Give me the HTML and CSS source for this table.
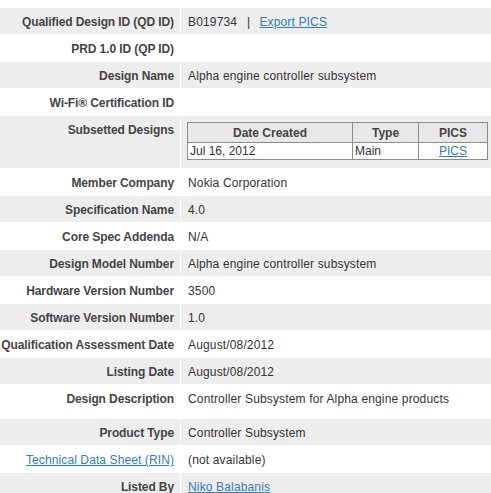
FILE: index.html
```html
<!DOCTYPE html>
<html>
<head>
<meta charset="utf-8">
<link rel="stylesheet" href="styles.css">
</head>
<body>
<div class="details">
  <div class="row gray"><div class="label">Qualified Design ID (QD ID)</div><div class="value">B019734<span class="sep">|</span><a href="#">Export PICS</a></div></div>
  <div class="row"><div class="label">PRD 1.0 ID (QP ID)</div><div class="value"></div></div>
  <div class="row gray"><div class="label">Design Name</div><div class="value">Alpha engine controller subsystem</div></div>
  <div class="row"><div class="label">Wi-Fi® Certification ID</div><div class="value"></div></div>
  <div class="row gray tall"><div class="label">Subsetted Designs</div><div class="value sub">
    <table class="subs">
      <thead><tr><th class="c1">Date Created</th><th class="c2">Type</th><th class="c3">PICS</th></tr></thead>
      <tbody><tr><td>Jul 16, 2012</td><td>Main</td><td class="center"><a href="#">PICS</a></td></tr></tbody>
    </table>
  </div></div>
  <div class="row"><div class="label">Member Company</div><div class="value">Nokia Corporation</div></div>
  <div class="row gray"><div class="label">Specification Name</div><div class="value">4.0</div></div>
  <div class="row"><div class="label">Core Spec Addenda</div><div class="value">N/A</div></div>
  <div class="row gray"><div class="label">Design Model Number</div><div class="value">Alpha engine controller subsystem</div></div>
  <div class="row"><div class="label">Hardware Version Number</div><div class="value">3500</div></div>
  <div class="row gray"><div class="label">Software Version Number</div><div class="value">1.0</div></div>
  <div class="row"><div class="label">Qualification Assessment Date</div><div class="value">August/08/2012</div></div>
  <div class="row gray"><div class="label">Listing Date</div><div class="value">August/08/2012</div></div>
  <div class="row desc"><div class="label">Design Description</div><div class="value">Controller Subsystem for Alpha engine products</div></div>
  <div class="row gray"><div class="label">Product Type</div><div class="value">Controller Subsystem</div></div>
  <div class="row"><div class="label"><a href="#" class="plain">Technical Data Sheet (RIN)</a></div><div class="value">(not available)</div></div>
  <div class="row gray"><div class="label">Listed By</div><div class="value"><a href="#">Niko Balabanis</a></div></div>
</div>
</body>
</html>
```
FILE: styles.css
```css
html, body {
  margin: 0;
  padding: 0;
  background: #ffffff;
}
body {
  font-family: "Liberation Sans", Arial, sans-serif;
  font-size: 12px;
  color: #333333;
  overflow: hidden;
}
.details {
  padding-top: 8px;
  display: flex;
  flex-direction: column;
  gap: 1px;
}
.row {
  display: grid;
  grid-template-columns: 180px 1fr;
  column-gap: 1px;
}
.row.gray .label,
.row.gray .value {
  background: #ededed;
}
.label {
  display: flex;
  justify-content: flex-end;
  align-items: flex-start;
  white-space: nowrap;
  font-weight: bold;
  color: #444444;
  letter-spacing: -0.1px;
  padding: 7px 6px 5px 0;
  line-height: 14px;
  min-height: 14px;
}
.value {
  padding: 7px 6px 5px 7px;
  line-height: 14px;
  min-height: 14px;
  white-space: nowrap;
  letter-spacing: 0.15px;
}
.row.desc .value {
  padding-bottom: 12px;
}
.value.sub {
  padding: 6px 0 8px 6px;
  letter-spacing: 0;
}
.sep {
  margin: 0 9px 0 10px;
}
a {
  color: #2f7fb7;
  text-decoration: underline;
}
a.plain {
  font-weight: normal;
  letter-spacing: 0.1px;
}
.subs {
  border-collapse: collapse;
  width: 301px;
  border: 1px solid #222222;
  font-size: 12px;
  color: #333333;
}
.subs th,
.subs td {
  border: 1px solid #8c8c8c;
  padding: 0 2px;
  line-height: 14px;
}
.subs th {
  background: #e8e8e8;
  font-weight: bold;
  color: #444444;
  height: 18px;
  text-align: center;
  padding-top: 1px;
}
.subs td {
  background: #ffffff;
  height: 16px;
  text-align: left;
}
.subs td.center {
  text-align: center;
}
.subs .c1 { width: 160px; }
.subs .c2 { width: 61px; }
.subs .c3 { width: 64px; }
```
